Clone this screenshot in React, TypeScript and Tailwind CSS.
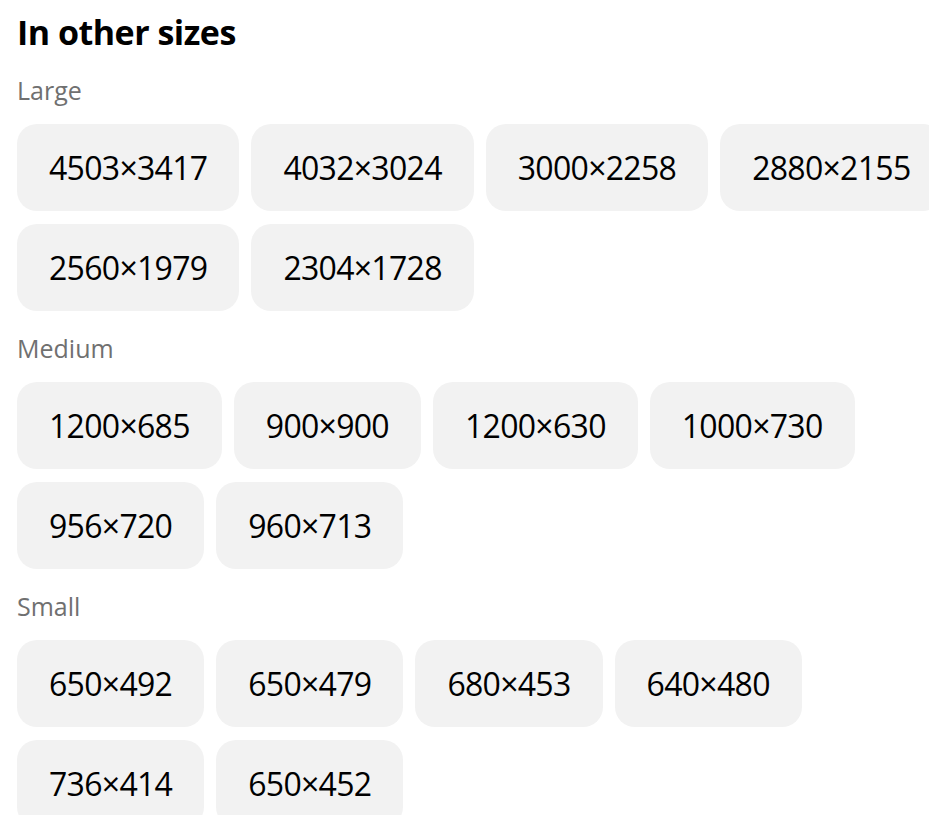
import React from "react";

const sections: { label: string; rows: string[][] }[] = [
  {
    label: "Large",
    rows: [
      ["4503×3417", "4032×3024", "3000×2258", "2880×2155"],
      ["2560×1979", "2304×1728"],
    ],
  },
  {
    label: "Medium",
    rows: [
      ["1200×685", "900×900", "1200×630", "1000×730"],
      ["956×720", "960×713"],
    ],
  },
  {
    label: "Small",
    rows: [
      ["650×492", "650×479", "680×453", "640×480"],
      ["736×414", "650×452"],
    ],
  },
];

export default function App() {
  return (
    <div
      className="w-[929px] h-[815px] overflow-hidden bg-white pl-[17px] pt-[12px]"
      style={{ fontFamily: '"Open Sans", "Noto Sans", sans-serif' }}
    >
      <h2 className="text-[34px] leading-[40px] font-bold text-black tracking-[-0.5px]">
        In other sizes
      </h2>
      {sections.map((s, i) => (
        <div key={s.label}>
          <div
            className={`${i === 0 ? "mt-[22px]" : "mt-[21px]"} mb-[18px] h-8 text-[25px] leading-[32px] text-[#707070]`}
          >
            {s.label}
          </div>
          <div className="flex flex-col gap-[13px]">
            {s.rows.map((row, ri) => (
              <div key={ri} className="flex flex-nowrap gap-3">
                {row.map((size) => (
                  <button
                    key={size}
                    className="shrink-0 h-[87px] px-[32px] rounded-[20px] bg-[#f2f2f2] text-black text-[32px] leading-[40px] tracking-[-0.7px] flex items-center justify-center"
                  >
                    {size}
                  </button>
                ))}
              </div>
            ))}
          </div>
        </div>
      ))}
    </div>
  );
}
